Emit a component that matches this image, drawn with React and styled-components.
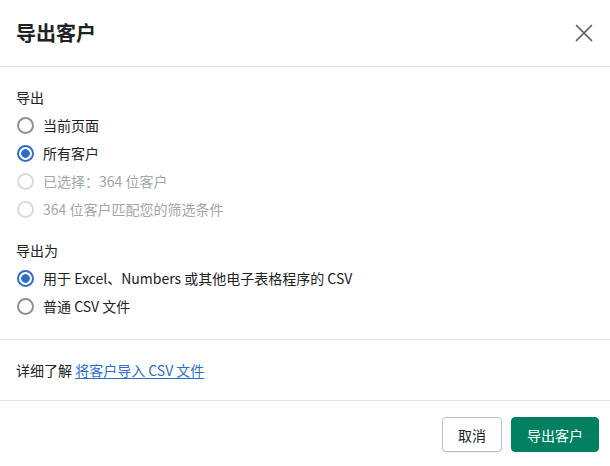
import styled, { createGlobalStyle } from 'styled-components'

const GlobalStyle = createGlobalStyle`
  html, body {
    margin: 0;
    padding: 0;
    background: #fff;
  }
  body {
    font-family: "Noto Sans CJK SC", "Noto Sans", sans-serif;
    color: #202223;
  }
`

const Dialog = styled.div`
  width: 610px;
  min-height: 466px;
  background: #fff;
  display: flex;
  flex-direction: column;
  & > * {
    flex-shrink: 0;
  }
`

const Header = styled.header`
  height: 66px;
  display: flex;
  align-items: center;
  justify-content: space-between;
  padding: 0 16px;
  border-bottom: 1px solid #e1e3e5;
`

const Title = styled.h2`
  margin: 0;
  font-size: 20px;
  font-weight: 700;
  line-height: 28px;
  color: #202223;
`

const CloseButton = styled.button`
  border: 0;
  background: none;
  padding: 0;
  width: 20px;
  height: 20px;
  display: flex;
  align-items: center;
  justify-content: center;
  cursor: pointer;
`

const Section = styled.section`
  padding: ${p => p.$pad || '20px 16px'};
  border-bottom: 1px solid #e1e3e5;
`

const Group = styled.div`
  & + & {
    margin-top: 13px;
  }
`

const Label = styled.div`
  font-size: 14px;
  line-height: 28px;
  color: #202223;
`

const Option = styled.label`
  display: flex;
  align-items: center;
  height: 28px;
  gap: 9px;
  font-size: 14px;
  color: ${p => (p.$disabled ? '#a3a5a7' : '#202223')};
  cursor: ${p => (p.$disabled ? 'default' : 'pointer')};
`

const Radio = styled.span`
  box-sizing: border-box;
  width: 17px;
  height: 17px;
  margin-left: 1px;
  border-radius: 50%;
  border: 2px solid ${p => (p.$checked ? '#2c6ecb' : p.$disabled ? '#d9dadb' : '#8c9196')};
  background: ${p =>
    p.$checked ? 'radial-gradient(circle, #2c6ecb 0 4px, #fff 4.6px)' : '#fff'};
  flex-shrink: 0;
`

const Text = styled.p`
  margin: 0;
  font-size: 14px;
  line-height: 20px;
  color: #202223;
`

const Link = styled.a`
  color: #2c6ecb;
  text-decoration: underline;
  text-underline-offset: 2px;
  cursor: pointer;
`

const Footer = styled.footer`
  display: flex;
  justify-content: flex-end;
  gap: 9px;
  padding: 16px 11px 14px 16px;
`

const Button = styled.button`
  height: 35px;
  padding: 0 15px;
  border-radius: 4px;
  font-family: inherit;
  font-size: 14px;
  cursor: pointer;
  border: 1px solid ${p => (p.$primary ? '#008060' : '#babfc3')};
  background: ${p => (p.$primary ? '#008060' : '#fff')};
  color: ${p => (p.$primary ? '#fff' : '#202223')};
  box-shadow: ${p => (p.$primary ? 'none' : '0 1px 0 rgba(0,0,0,0.05)')};
`

const scopeOptions = [
  { label: '当前页面' },
  { label: '所有客户', checked: true },
  { label: '已选择：364 位客户', disabled: true },
  { label: '364 位客户匹配您的筛选条件', disabled: true }
]

const formatOptions = [
  { label: '用于 Excel、Numbers 或其他电子表格程序的 CSV', checked: true },
  { label: '普通 CSV 文件' }
]

function RadioRow({ label, checked, disabled }) {
  return (
    <Option $disabled={disabled}>
      <Radio $checked={checked} $disabled={disabled} />
      {label}
    </Option>
  )
}

export default function App() {
  return (
    <>
      <GlobalStyle />
      <Dialog>
        <Header>
          <Title>导出客户</Title>
          <CloseButton aria-label="关闭">
            <svg width="18" height="18" viewBox="0 0 18 18">
              <path d="M1.5 1.5 16.5 16.5M16.5 1.5 1.5 16.5" stroke="#5c5f62" strokeWidth="1.7" strokeLinecap="round" />
            </svg>
          </CloseButton>
        </Header>

        <Section $pad="16px 16px 19px">
          <Group>
            <Label>导出</Label>
            {scopeOptions.map(o => (
              <RadioRow key={o.label} {...o} />
            ))}
          </Group>
          <Group>
            <Label>导出为</Label>
            {formatOptions.map(o => (
              <RadioRow key={o.label} {...o} />
            ))}
          </Group>
        </Section>

        <Section>
          <Text>
            详细了解 <Link>将客户导入 CSV 文件</Link>
          </Text>
        </Section>

        <Footer>
          <Button>取消</Button>
          <Button $primary>导出客户</Button>
        </Footer>
      </Dialog>
    </>
  )
}
